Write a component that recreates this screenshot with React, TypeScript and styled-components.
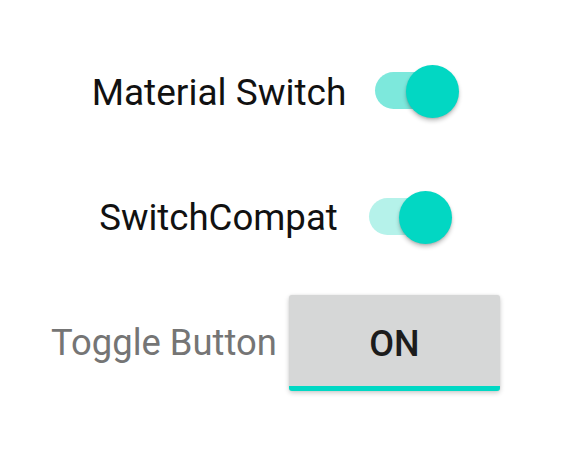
import React from "react";
import styled, { createGlobalStyle } from "styled-components";

const Global = createGlobalStyle`
  html, body { margin: 0; padding: 0; background: #ffffff; }
  body { font-family: Roboto, "Noto Sans", sans-serif; }
`;

const Page = styled.div`
  width: 567px;
  height: 462px;
  box-sizing: border-box;
  padding-right: 16px;
  display: flex;
  flex-direction: column;
  align-items: center;
  overflow: hidden;
`;

const Row = styled.div<{ $top: number; $height: number; $gap: number }>`
  display: flex;
  align-items: center;
  height: ${(p) => p.$height}px;
  margin-top: ${(p) => p.$top}px;
  gap: ${(p) => p.$gap}px;
`;

const Label = styled.span<{ $size: number; $muted?: boolean }>`
  font-family: Roboto, "Noto Sans", sans-serif;
  font-size: ${(p) => p.$size}px;
  color: ${(p) => (p.$muted ? "#757575" : "#111111")};
  white-space: nowrap;
  line-height: 1;
`;

const SwitchBox = styled.div<{ $width: number }>`
  position: relative;
  width: ${(p) => p.$width}px;
  height: 60px;
`;

const Track = styled.div<{ $color: string; $width: number }>`
  position: absolute;
  left: 0;
  top: 10px;
  width: ${(p) => p.$width}px;
  height: 37px;
  border-radius: 18.5px;
  background: ${(p) => p.$color};
`;

const Thumb = styled.div`
  position: absolute;
  right: 0;
  top: 3px;
  width: 53px;
  height: 53px;
  border-radius: 50%;
  background: #02d7c3;
  box-shadow: 0 3px 4px rgba(0, 0, 0, 0.22), 0 1px 2px rgba(0, 0, 0, 0.12);
`;

const ToggleButton = styled.button`
  width: 211px;
  height: 96px;
  border: none;
  border-radius: 3px;
  background: #d6d7d7;
  border-bottom: 5px solid #00d8c4;
  box-shadow: 0 2px 5px rgba(0, 0, 0, 0.2), 0 0 2px rgba(0, 0, 0, 0.08);
  font-family: Roboto, "Noto Sans", sans-serif;
  font-weight: 500;
  font-size: 36px;
  color: #1c1c1c;
  padding: 6px 0 0 0;
  display: flex;
  align-items: center;
  justify-content: center;
  box-sizing: border-box;
`;

export default function App() {
  return (
    <>
      <Global />
      <Page>
        <Row $top={62} $height={60} $gap={29}>
          <Label $size={37}>Material Switch</Label>
          <SwitchBox $width={84}>
            <Track $color="#7de8dc" $width={76} />
            <Thumb />
          </SwitchBox>
        </Row>
        <Row $top={66} $height={60} $gap={31}>
          <Label $size={36.6}>SwitchCompat</Label>
          <SwitchBox $width={83}>
            <Track $color="#b5f2ea" $width={74} />
            <Thumb />
          </SwitchBox>
        </Row>
        <Row $top={47} $height={96} $gap={12}>
          <Label $size={36.4} $muted>Toggle Button</Label>
          <ToggleButton>ON</ToggleButton>
        </Row>
      </Page>
    </>
  );
}
